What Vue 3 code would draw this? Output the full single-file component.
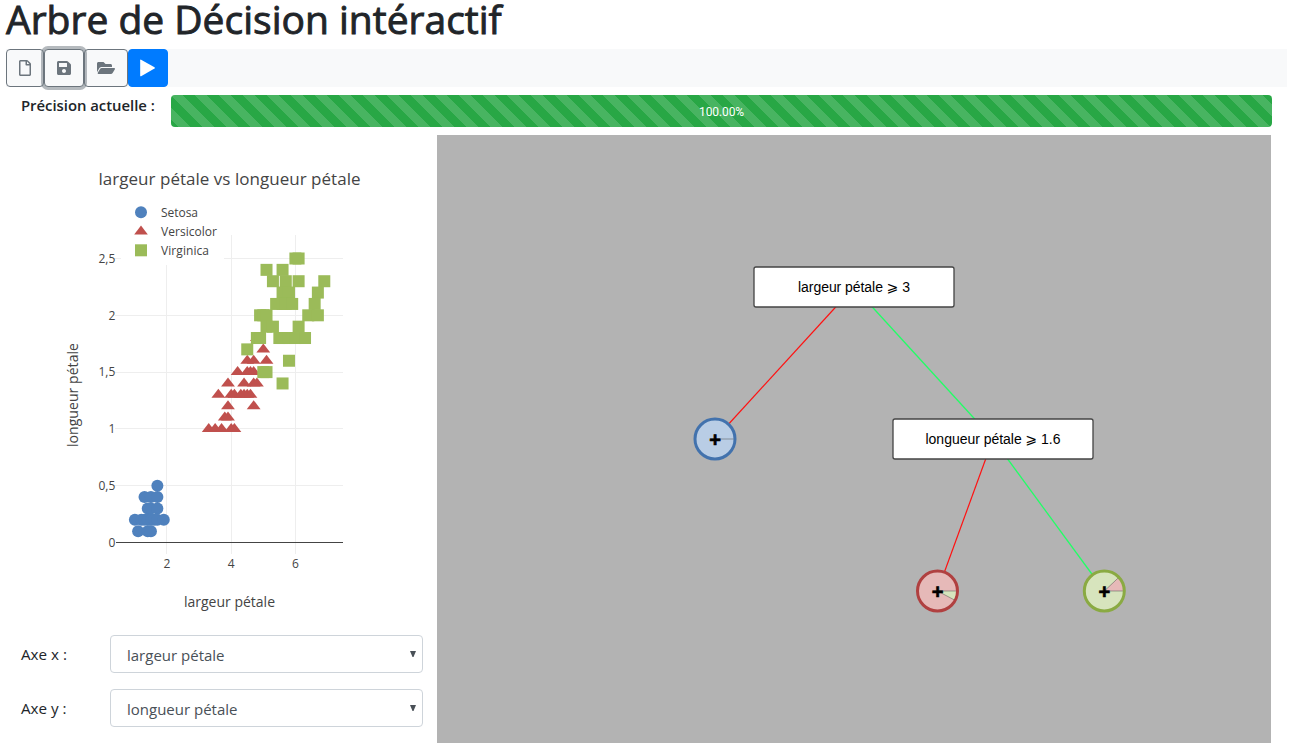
<script setup>
import { ref } from 'vue'

const accuracy = ref(100)
const xAxis = ref('largeur pétale')
const yAxis = ref('longueur pétale')
const features = ['largeur pétale', 'longueur pétale']

const px = (v) => 102.8 + 32.1 * v
const py = (v) => 407.5 - 113.6 * v

// Each row: y value followed by the x values found at that height
const toPoints = (rows) => rows.flatMap(([y, ...xs]) => xs.map((x) => ({ x: px(x), y: py(y) })))

const setosa = toPoints([
  [0.5, 1.7],
  [0.4, 1.3, 1.5, 1.7],
  [0.3, 1.4, 1.5, 1.7],
  [0.2, 1.0, 1.2, 1.3, 1.4, 1.5, 1.6, 1.7, 1.9],
  [0.1, 1.1, 1.4, 1.5],
])
const versicolor = toPoints([
  [1.8, 4.8],
  [1.7, 5.0],
  [1.6, 4.5, 4.7, 5.1],
  [1.5, 4.2, 4.5, 4.6, 4.7],
  [1.4, 3.9, 4.4, 4.7, 4.8],
  [1.3, 3.6, 4.0, 4.1, 4.3, 4.4, 4.5, 4.6],
  [1.2, 3.9, 4.7],
  [1.1, 3.8, 3.9],
  [1.0, 3.3, 3.5, 3.7, 4.0, 4.1],
])
const virginica = toPoints([
  [2.5, 6.0, 6.1],
  [2.4, 5.1, 5.6],
  [2.3, 5.3, 5.7, 6.1, 6.9],
  [2.2, 5.6, 5.8, 6.7],
  [2.1, 5.4, 5.6, 5.7, 5.9, 6.6],
  [2.0, 4.9, 5.0, 5.1, 6.4, 6.7],
  [1.9, 5.1, 5.3, 6.1],
  [1.8, 4.8, 4.9, 5.5, 5.6, 5.8, 6.0, 6.3],
  [1.7, 4.5],
  [1.6, 5.8],
  [1.5, 5.0, 5.1],
  [1.4, 5.6],
])
const triangle = (p) => `M${p.x - 6.93} ${p.y + 3}h13.86l-6.93-9z`

const xTicks = [2, 4, 6]
const yTicks = [
  { v: 0, label: '0' },
  { v: 0.5, label: '0,5' },
  { v: 1, label: '1' },
  { v: 1.5, label: '1,5' },
  { v: 2, label: '2' },
  { v: 2.5, label: '2,5' },
]

const edges = [
  { x1: 417, y1: 152, x2: 278, y2: 304, kind: 'no' },
  { x1: 417, y1: 152, x2: 556, y2: 304, kind: 'yes' },
  { x1: 556, y1: 304, x2: 500.5, y2: 456, kind: 'no' },
  { x1: 556, y1: 304, x2: 667.3, y2: 456, kind: 'yes' },
]
const tests = [
  { x: 417, y: 152, label: 'largeur pétale ⩾ 3', w: 112 },
  { x: 556, y: 304, label: 'longueur pétale ⩾ 1.6', w: 135 },
]
const leaves = [
  { x: 278, y: 304, kind: 'blue', slice: '' },
  { x: 500.5, y: 456, kind: 'red', slice: 'M0 0L20 0A20 20 0 0 1 17.7 9.4Z' },
  { x: 667.3, y: 456, kind: 'green', slice: 'M0 0L14.6 -13.7A20 20 0 0 1 20 0Z' },
]
</script>

<template>
  <main class="page">
    <h1 class="title">Arbre de Décision intéractif</h1>

    <div class="toolbar">
      <button class="btn" aria-label="Nouveau">
        <svg width="12" height="16" viewBox="0 0 384 512"><path d="M369.9 97.9L286 14C277 5 264.8-.1 252.1-.1H48C21.5 0 0 21.5 0 48v416c0 26.5 21.5 48 48 48h288c26.5 0 48-21.5 48-48V131.9c0-12.7-5.1-25-14.1-34zM332.1 128H256V51.9l76.1 76.1zM48 464V48h160v104c0 13.3 10.7 24 24 24h104v288H48z" /></svg>
      </button>
      <button class="btn focused" aria-label="Enregistrer">
        <svg width="14" height="16" viewBox="0 0 448 512"><path d="M433.941 129.941l-83.882-83.882A48 48 0 0 0 316.118 32H48C21.49 32 0 53.49 0 80v352c0 26.51 21.49 48 48 48h352c26.51 0 48-21.49 48-48V163.882a48 48 0 0 0-14.059-33.941zM224 416c-35.346 0-64-28.654-64-64s28.654-64 64-64 64 28.654 64 64-28.654 64-64 64zm96-304.52V212c0 6.627-5.373 12-12 12H76c-6.627 0-12-5.373-12-12V108c0-6.627 5.373-12 12-12h228.52c3.183 0 6.235 1.264 8.485 3.515l3.48 3.48A11.996 11.996 0 0 1 320 111.48z" /></svg>
      </button>
      <button class="btn" aria-label="Ouvrir">
        <svg width="18" height="16" viewBox="0 0 576 512"><path d="M572.694 292.093L500.27 416.248A63.997 63.997 0 0 1 444.989 448H45.025c-18.523 0-30.064-20.093-20.731-36.093l72.424-124.155A64 64 0 0 1 152 256h399.964c18.523 0 30.064 20.093 20.73 36.093zM152 224h328v-48c0-26.51-21.49-48-48-48H272l-64-64H48C21.49 64 0 85.49 0 112v278.046l69.077-118.418C86.214 242.25 117.989 224 152 224z" /></svg>
      </button>
      <button class="btn primary" aria-label="Lancer">
        <svg width="16" height="18" viewBox="0 0 16 18"><path d="M.2 1.2Q.2 .2 1.1 .7L14.5 8.3Q15.4 9 14.5 9.6L1.1 17.2Q.2 17.7 .2 16.7Z" /></svg>
      </button>
    </div>

    <div class="accuracy">
      <label class="accuracy-label">Précision actuelle :</label>
      <div class="progress">
        <div class="bar" :style="{ width: accuracy + '%' }"><span>{{ accuracy.toFixed(2) }}%</span></div>
      </div>
    </div>

    <div class="content">
      <section class="side">
        <svg class="plot" width="437" height="492" viewBox="0 0 437 492">
          <text class="plot-title" x="98.5" y="50" textLength="262">largeur pétale vs longueur pétale</text>

          <g class="grid">
            <path v-for="t in xTicks" :key="t" :d="`M${Math.floor(px(t) - 0.1) + 0.5} 100V419`" />
            <path v-for="t in yTicks.slice(1)" :key="t.v" :d="`M115 ${Math.floor(py(t.v)) + 0.5}H343`" />
          </g>
          <path class="zero" d="M116 407.5H343" />

          <circle v-for="(p, i) in setosa" :key="'s' + i" class="setosa" :cx="p.x" :cy="p.y" r="6" />
          <path v-for="(p, i) in versicolor" :key="'v' + i" class="versicolor" :d="triangle(p)" />
          <rect v-for="(p, i) in virginica" :key="'g' + i" class="virginica" :x="p.x - 6" :y="p.y - 6" width="12" height="12" />

          <rect class="legend-bg" x="121" y="66" width="103" height="64" />
          <circle class="setosa" cx="141" cy="77.3" r="6" />
          <path class="versicolor" d="M134.2 99.6h13.6l-6.8-9z" />
          <rect class="virginica" x="135" y="109.3" width="12" height="12" />
          <g class="legend-text">
            <text x="161" y="82" textLength="37">Setosa</text>
            <text x="161" y="101" textLength="56">Versicolor</text>
            <text x="161" y="120" textLength="48">Virginica</text>
          </g>

          <g class="ticks">
            <text v-for="t in yTicks" :key="t.v" x="115.3" :y="py(t.v) + 4.3" text-anchor="end">{{ t.label }}</text>
            <text v-for="t in xTicks" :key="t" :x="px(t)" y="433" text-anchor="middle">{{ t }}</text>
          </g>
          <text class="axis" x="184" y="472" textLength="91">largeur pétale</text>
          <text class="axis" transform="translate(78 312) rotate(-90)" textLength="104">longueur pétale</text>
        </svg>

        <div class="field">
          <label>Axe x :</label>
          <div class="select-wrap">
            <select v-model="xAxis"><option v-for="f in features" :key="f">{{ f }}</option></select>
            <svg width="6" height="6" viewBox="0 0 6 6"><path d="M0 0H6L3.5 6h-1Z" /></svg>
          </div>
        </div>
        <div class="field">
          <label>Axe y :</label>
          <div class="select-wrap">
            <select v-model="yAxis"><option v-for="f in features" :key="f">{{ f }}</option></select>
            <svg width="6" height="6" viewBox="0 0 6 6"><path d="M0 0H6L3.5 6h-1Z" /></svg>
          </div>
        </div>
      </section>

      <svg class="tree" width="834" height="608" viewBox="0 0 834 608">
        <line v-for="(e, i) in edges" :key="i" :class="e.kind" :x1="e.x1" :y1="e.y1" :x2="e.x2" :y2="e.y2" />
        <g v-for="n in tests" :key="n.label" class="test" :transform="`translate(${n.x} ${n.y})`">
          <rect x="-100" y="-20" width="200" height="40" rx="2" />
          <text :x="-n.w / 2" y="5" :textLength="n.w">{{ n.label }}</text>
        </g>
        <g v-for="l in leaves" :key="l.kind" :class="['leaf', l.kind]" :transform="`translate(${l.x} ${l.y})`">
          <circle r="20" class="disc" />
          <path v-if="l.slice" :d="l.slice" class="slice" />
          <path v-else d="M0 0H20" class="slice" />
          <circle r="20" class="ring" />
          <text y="8" text-anchor="middle">+</text>
        </g>
      </svg>
    </div>
  </main>
</template>

<style>
html,
body {
  margin: 0;
  background: #fff;
  overflow: hidden;
}
</style>

<style scoped>
.page {
  box-sizing: border-box;
  height: 756px;
  padding: 0 7px 0 6px;
  font-family: "Open Sans", "Noto Sans", sans-serif;
  font-size: 16px;
  color: #212529;
}
.title {
  margin: 0;
  height: 49px;
  font-size: 39px;
  line-height: 37px;
  font-weight: 500;
  white-space: nowrap;
  -webkit-text-stroke: 0.9px #212529;
}
.toolbar {
  display: flex;
  height: 38px;
  background: #f8f9fa;
}
.btn {
  display: flex;
  align-items: center;
  box-sizing: border-box;
  height: 38px;
  padding: 0 12px;
  border: 1px solid #6c757d;
  border-radius: 4px;
  background: transparent;
  fill: #6c757d;
}
.btn.focused {
  position: relative;
  background: #f8f9fa;
  box-shadow: 0 0 0 3px rgba(108, 117, 125, 0.5);
}
.btn.primary {
  padding: 0 11px;
  border-color: #007bff;
  background: #007bff;
  fill: #fff;
}
.accuracy {
  display: flex;
  margin-top: 8px;
  padding: 0 15px;
  height: 32px;
}
.accuracy-label {
  width: 150px;
  font-size: 14.9px;
  line-height: 21px;
  font-weight: 600;
  letter-spacing: -0.03px;
  white-space: nowrap;
}
.progress {
  flex: 1;
  border-radius: 4px;
  overflow: hidden;
  background: #e9ecef;
}
.bar {
  display: flex;
  align-items: center;
  justify-content: center;
  box-sizing: border-box;
  height: 32px;
  padding-top: 2px;
  background-color: #28a745;
  background-image: linear-gradient(45deg, rgba(255, 255, 255, 0.15) 25%, transparent 25%, transparent 50%, rgba(255, 255, 255, 0.15) 50%, rgba(255, 255, 255, 0.15) 75%, transparent 75%, transparent);
  background-size: 24px 24px;
  font-family: Roboto, sans-serif;
  font-size: 12px;
  letter-spacing: -0.1px;
  color: #fff;
}
.content {
  display: flex;
  margin-top: 8px;
}
.side {
  width: 431px;
}
.plot {
  display: block;
  margin-left: -6px;
  fill: #444;
}
.plot-title {
  font-size: 17px;
}
.legend-text {
  font-size: 12px;
}
.ticks {
  font-size: 12px;
}
.axis {
  font-size: 14px;
}
.grid path {
  stroke: #eee;
}
.zero {
  stroke: #444;
}
.legend-bg {
  fill: #fff;
}
.setosa {
  fill: #4f81bd;
}
.versicolor {
  fill: #c0504d;
}
.virginica {
  fill: #9bbb59;
}
.field {
  display: flex;
  align-items: center;
  margin: 8px 14px 16px 15px;
  height: 38px;
}
.field label {
  width: 89px;
  font-size: 15.2px;
}
.select-wrap {
  display: grid;
  flex: 1;
  align-items: center;
}
.select-wrap > * {
  grid-area: 1 / 1;
}
.select-wrap svg {
  justify-self: end;
  margin-right: 7px;
  pointer-events: none;
  fill: #495057;
}
select {
  appearance: none;
  box-sizing: border-box;
  width: 100%;
  height: 38px;
  padding: 1px 16px 0;
  border: 1px solid #ced4da;
  border-radius: 4px;
  background: #fff;
  font: 15px "Open Sans", "Noto Sans", sans-serif;
  color: #495057;
}
.tree {
  display: block;
  background: #b3b3b3;
}
.no {
  stroke: #f11;
  stroke-width: 1.2;
}
.yes {
  stroke: #2f6;
  stroke-width: 1.3;
}
.test rect {
  fill: #fff;
  stroke: #444;
  stroke-width: 1.3;
}
.test text {
  font: 14px "Liberation Sans", "DejaVu Sans", sans-serif;
  fill: #000;
}
.leaf text {
  font: bold 20px "Liberation Sans", sans-serif;
  fill: #000;
  stroke: #000;
  stroke-width: 0.7;
}
.ring {
  fill: none;
  stroke-width: 3;
}
.slice {
  stroke: rgba(80, 80, 80, 0.5);
}
.blue .disc { fill: #b9cde5; }
.blue .ring { stroke: #4272ad; }
.red .disc { fill: #e6b9b8; }
.red .ring { stroke: #b04040; }
.red .slice { fill: #d7e4bd; }
.green .disc { fill: #d7e4bd; }
.green .ring { stroke: #8aaa42; }
.green .slice { fill: #e6b9b8; }
</style>
